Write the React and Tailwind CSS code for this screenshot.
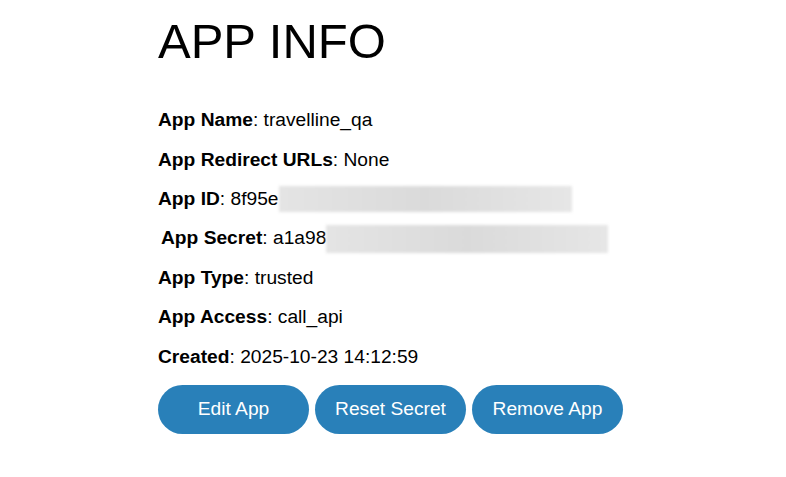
const rows = [
  { label: 'App Name', value: 'travelline_qa' },
  { label: 'App Redirect URLs', value: 'None' },
  { label: 'App ID', value: '8f95e', hidden: 'w-[293px] h-[26px]' },
  { label: 'App Secret', value: 'a1a98', hidden: 'w-[282px] h-[28px]', indent: true },
  { label: 'App Type', value: 'trusted' },
  { label: 'App Access', value: 'call_api' },
  { label: 'Created', value: '2025-10-23 14:12:59' },
];

const Redacted = ({ size }) => (
  <span
    className={`inline-block align-middle ${size} bg-gradient-to-r from-[#e4e4e4] via-[#dadada] to-[#e6e6e6] blur-[1.5px]`}
  />
);

export default function App() {
  return (
    <div className="min-h-[477px] bg-white text-black font-['Liberation_Sans',Arial,sans-serif]">
      <div className="w-[470px] mx-auto pt-[13px]">
        <h1 className="text-[49px] leading-[56px] font-normal">APP INFO</h1>

        <div className="mt-[32px] flex flex-col text-[19.2px]">
          {rows.map((row) => (
            <div
              key={row.label}
              className={`h-[39.4px] flex items-center whitespace-nowrap ${row.indent ? 'pl-[3px]' : ''}`}
            >
              <span className="font-bold">{row.label}</span>
              <span>:&nbsp;{row.value}</span>
              {row.hidden && <Redacted size={row.hidden} />}
            </div>
          ))}
        </div>

        <div className="mt-[8px] flex gap-[6px]">
          {['Edit App', 'Reset Secret', 'Remove App'].map((label) => (
            <button
              key={label}
              type="button"
              className="w-[151px] h-[49px] rounded-full bg-[#2980b9] text-white text-[19.2px] flex items-center justify-center"
            >
              {label}
            </button>
          ))}
        </div>
      </div>
    </div>
  );
}
